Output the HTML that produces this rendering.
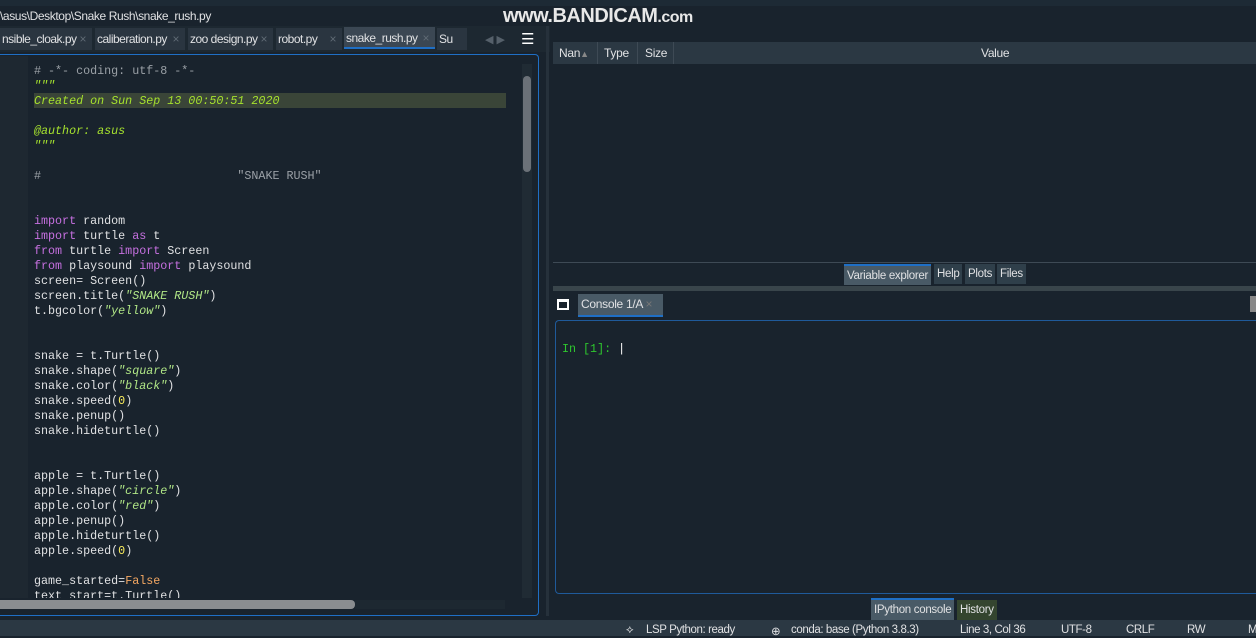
<!DOCTYPE html>
<html><head><meta charset="utf-8"><style>
*{margin:0;padding:0;box-sizing:border-box}
body{width:1256px;height:636px;background:#19232d;overflow:hidden;position:relative;font-family:"Liberation Sans",sans-serif;color:#e0e1e3}
.a{position:absolute}
.code{font-family:"Liberation Mono",monospace;font-size:11.7px;white-space:pre;line-height:15px}
.k{color:#c670e0}.s{color:#b0e686;font-style:italic}.c{color:#9aa0a6}.n{color:#faed5c}.f{color:#f5a862}.d{color:#a6e22e;font-style:italic}
.tab{position:absolute;top:28px;height:22px;background:#2a3540;font-size:12px;line-height:22px;padding-left:2px;color:#e0e1e3;letter-spacing:-0.5px}
.tab i{font-style:normal;color:#5f6a74;position:absolute;right:6px}
.btn{position:absolute;font-size:11.5px;letter-spacing:-0.3px;background:#2f3f4a;height:20px;line-height:20px;padding:0 3px;color:#e0e1e3}
.st{position:absolute;top:624px;font-size:11.5px;letter-spacing:-0.4px;white-space:pre}
</style></head><body>
<div class="a" style="left:0;top:0;width:1256px;height:6px;background:#1d2a35"></div>
<div class="a" style="left:0;top:9px;font-size:12px;letter-spacing:-0.4px">\asus\Desktop\Snake Rush\snake_rush.py</div>
<div class="a" style="left:503px;top:5px;font-size:20px;font-weight:bold;color:#e8e8e8;letter-spacing:-0.5px">www.BANDICAM<span style="font-size:16px">.com</span></div>
<div class="a" style="left:0;top:26px;width:550px;height:26px;background:#1d2831"></div>
<div class="tab" style="left:0;width:92px">nsible_cloak.py<i>×</i></div>
<div class="tab" style="left:95px;width:90px">caliberation.py<i>×</i></div>
<div class="tab" style="left:188px;width:85px">zoo design.py<i>×</i></div>
<div class="tab" style="left:276px;width:66px">robot.py<i>×</i></div>
<div class="tab" style="left:344px;width:91px;top:27px;background:#3b4753;border-bottom:2px solid #1f6fc5">snake_rush.py<i>×</i></div>
<div class="tab" style="left:437px;width:30px">Su</div>
<div class="a" style="left:485px;top:33px;color:#55606a;font-size:11px">◀ ▶</div>
<div class="a" style="left:521px;top:30px;font-size:15px;color:#fff">☰</div>
<!-- editor -->
<div class="a" style="left:0;top:54px;width:539px;height:562px;border:1px solid #1f6fc5;border-left:none;border-radius:0 4px 4px 0"></div>
<div class="a" style="left:0;top:56px;width:28px;height:542px;background:#1e2831"></div>
<div class="a" style="left:34px;top:93px;width:472px;height:15px;background:#3a4538"></div>
<div class="a" style="left:522px;top:64px;width:10px;height:534px;background:#202b34"></div>
<div class="a" style="left:523px;top:76px;width:8px;height:96px;background:#6b7178;border-radius:4px"></div>
<div class="a code" style="left:34px;top:64px;height:534px;overflow:hidden;color:#e0e1e3"><span class="c"># -*- coding: utf-8 -*-</span>
<span class="d">"""</span>
<span class="d">Created on Sun Sep 13 00:50:51 2020</span>

<span class="d">@author: asus</span>
<span class="d">"""</span>

<span class="c">#                            "SNAKE RUSH"</span>


<span class="k">import</span> random
<span class="k">import</span> turtle <span class="k">as</span> t
<span class="k">from</span> turtle <span class="k">import</span> Screen
<span class="k">from</span> playsound <span class="k">import</span> playsound
screen= Screen()
screen.title(<span class="s">"SNAKE RUSH"</span>)
t.bgcolor(<span class="s">"yellow"</span>)


snake = t.Turtle()
snake.shape(<span class="s">"square"</span>)
snake.color(<span class="s">"black"</span>)
snake.speed(<span class="n">0</span>)
snake.penup()
snake.hideturtle()


apple = t.Turtle()
apple.shape(<span class="s">"circle"</span>)
apple.color(<span class="s">"red"</span>)
apple.penup()
apple.hideturtle()
apple.speed(<span class="n">0</span>)

game_started=<span class="f">False</span>
text_start=t.Turtle()</div>
<div class="a" style="left:0;top:600px;width:355px;height:9px;background:#8a8d90;border-radius:0 4px 4px 0"></div>
<div class="a" style="left:355px;top:600px;width:150px;height:9px;background:#1d2831"></div>
<!-- right -->
<div class="a" style="left:546px;top:26px;width:3px;height:590px;background:#26313b"></div>
<div class="a" style="left:553px;top:42px;width:703px;height:22px;background:#2b3843"></div>
<div class="a" style="left:559px;top:46px;font-size:12px;letter-spacing:-0.3px">Nan<span style="color:#888;font-size:9px">▲</span></div>
<div class="a" style="left:597px;top:42px;width:1px;height:22px;background:#3e4a55"></div>
<div class="a" style="left:604px;top:46px;font-size:12px;letter-spacing:-0.3px">Type</div>
<div class="a" style="left:637px;top:42px;width:1px;height:22px;background:#3e4a55"></div>
<div class="a" style="left:645px;top:46px;font-size:12px;letter-spacing:-0.3px">Size</div>
<div class="a" style="left:673px;top:42px;width:1px;height:22px;background:#3e4a55"></div>
<div class="a" style="left:981px;top:46px;font-size:12px;letter-spacing:-0.3px">Value</div>
<div class="a" style="left:553px;top:262px;width:703px;height:1px;background:#3e4a55"></div>
<div class="btn" style="left:844px;top:264px;height:21px;background:#495a66;border-top:2px solid #1f6fc5">Variable explorer</div>
<div class="btn" style="left:934px;top:264px">Help</div>
<div class="btn" style="left:965px;top:264px">Plots</div>
<div class="btn" style="left:997px;top:264px">Files</div>
<div class="a" style="left:553px;top:286px;width:703px;height:5px;background:#39454b"></div>
<div class="a" style="left:557px;top:299px;width:12px;height:11px;border:2px solid #fff;border-top-width:3px"></div>
<div class="a" style="left:578px;top:294px;width:85px;height:23px;background:#495a66;border-bottom:2px solid #1f6fc5;font-size:12px;line-height:21px;padding-left:3px;letter-spacing:-0.3px">Console 1/A <span style="color:#777">×</span></div>
<div class="a" style="left:1250px;top:296px;width:6px;height:16px;background:#888"></div>
<div class="a" style="left:555px;top:320px;width:705px;height:274px;border:1px solid #1f5a9a;border-right:none;border-radius:4px 0 0 4px"></div>
<div class="a code" style="left:562px;top:342px;color:#2ec72e">In [1]: <span style="color:#fff">|</span></div>
<div class="btn" style="left:871px;top:598px;height:22px;background:#495a66;border-top:2px solid #1f6fc5">IPython console</div>
<div class="btn" style="left:957px;top:600px;background:#34452f">History</div>
<!-- status -->
<div class="a" style="left:0;top:620px;width:1256px;height:16px;background:#2b3843"></div>
<div class="st" style="left:626px">⟡</div>
<div class="st" style="left:646px">LSP Python: ready</div>
<div class="st" style="left:771px">⊕</div>
<div class="st" style="left:791px">conda: base (Python 3.8.3)</div>
<div class="st" style="left:960px">Line 3, Col 36</div>
<div class="st" style="left:1061px">UTF-8</div>
<div class="st" style="left:1126px">CRLF</div>
<div class="st" style="left:1187px">RW</div>
<div class="st" style="left:1248px">Me</div>
</body></html>
